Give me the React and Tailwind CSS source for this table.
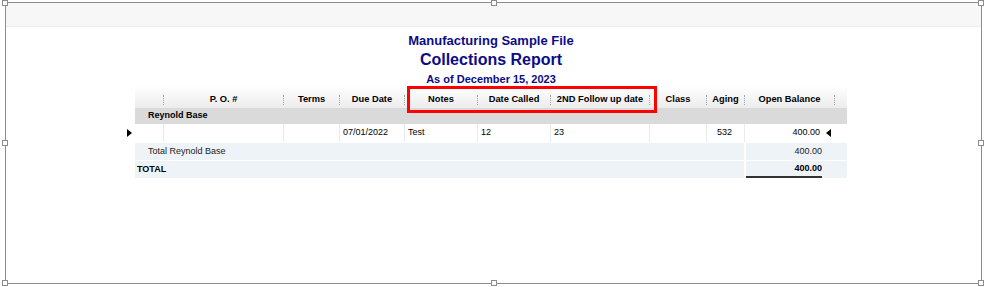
import React from 'react';

const cols = [
  { w: 'w-[28px]', label: '' },
  { w: 'w-[120px]', label: 'P. O. #' },
  { w: 'w-[56px]', label: 'Terms' },
  { w: 'w-[65px]', label: 'Due Date' },
  { w: 'w-[73px]', label: 'Notes' },
  { w: 'w-[73px]', label: 'Date Called' },
  { w: 'w-[99px]', label: '2ND Follow up date' },
  { w: 'w-[57px]', label: 'Class' },
  { w: 'w-[38px]', label: 'Aging' },
  { w: 'w-[90px]', label: 'Open Balance' },
  { w: 'w-[13px]', label: '' },
];

const rowData = ['', '', '', '07/01/2022', 'Test', '12', '23', '', '532', '400.00', ''];

const Handle = ({ className }) => (
  <div className={`absolute w-[6px] h-[6px] bg-white border border-[#8c8c8c] ${className}`} />
);

const MarkerRight = () => (
  <svg width="5" height="8" viewBox="0 0 5 8">
    <polygon points="0,0 5,4 0,8" fill="#000" />
  </svg>
);

const MarkerLeft = () => (
  <svg width="5" height="8" viewBox="0 0 5 8">
    <polygon points="5,0 0,4 5,8" fill="#000" />
  </svg>
);

export default function App() {
  return (
    <div className="relative w-[986px] h-[287px] bg-white overflow-hidden pt-[2px] pl-[5px] font-['Liberation_Sans',Arial,sans-serif] text-black">
      {/* selection frame */}
      <div className="relative w-[977px] h-[282px] border border-[#8c8c8c]">
        <div className="h-[24px] bg-[#f7f7f7] border-b border-[#ededed]" />

        {/* Titles */}
        <div className="ml-[129px] w-[712px] pt-[6px] text-center font-bold text-[#0c0c85]">
          <div className="text-[13px] leading-[15px]">Manufacturing Sample File</div>
          <div className="mt-[2px] text-[16px] leading-[19px]">Collections Report</div>
          <div className="mt-[4px] text-[11px] leading-[13px]">As of December 15, 2023</div>
        </div>

        {/* Report table */}
        <div className="ml-[119px] text-[9px]">
          {/* header */}
          <div className="flex">
            <div className="w-[10px]" />
            <div className="flex h-[22px] bg-linear-to-b from-white to-[#ececec] font-bold text-[9.3px]">
              {cols.map((c, i) => (
                <div key={i} className={`${c.w} flex items-end pb-[3px]`}>
                  {i > 0 && <span className="h-[10px] border-l border-dotted border-[#a0a0a0]" />}
                  <span className="flex-1 text-center leading-[11px] whitespace-nowrap">{c.label}</span>
                </div>
              ))}
            </div>
          </div>

          {/* group row */}
          <div className="flex">
            <div className="w-[10px]" />
            <div className="w-[712px] h-[16px] bg-[#dadada] flex items-center pl-[13px] font-bold">
              Reynold Base
            </div>
          </div>

          {/* data row */}
          <div className="flex h-[18px]">
            <div className="w-[10px] flex items-center pl-[2px]">
              <MarkerRight />
            </div>
            <div className="flex bg-white">
              {cols.map((c, i) => {
                if (i === 9) {
                  return (
                    <div key={i} className={`${c.w} flex items-center justify-end pr-[3px] border-l border-[#ebebeb]`}>
                      <span>{rowData[i]}</span>
                      <span className="ml-[6px] flex items-center">
                        <MarkerLeft />
                      </span>
                    </div>
                  );
                }
                return (
                  <div
                    key={i}
                    className={`${c.w} flex items-center ${i === 8 ? 'justify-end pr-[12px]' : 'px-[3px]'} ${
                      i > 0 && i < 10 ? 'border-l border-[#ebebeb]' : ''
                    }`}
                  >
                    {rowData[i]}
                  </div>
                );
              })}
            </div>
          </div>

          {/* total group row */}
          <div className="flex mt-[1px] h-[17px]">
            <div className="w-[10px]" />
            <div className="w-[609px] bg-[#eef3f8] flex items-center pl-[13px] text-[#222]">
              Total Reynold Base
            </div>
            <div className="w-[101px] ml-[2px] bg-[#eef3f8] flex items-center justify-end pr-[25px] text-[#222]">
              400.00
            </div>
          </div>

          {/* grand total */}
          <div className="flex mt-[1px] h-[17px] font-bold">
            <div className="w-[10px]" />
            <div className="w-[609px] bg-[#eef3f8] flex items-center pl-[2px]">TOTAL</div>
            <div className="w-[101px] ml-[2px] bg-[#eef3f8] flex justify-start">
              <div className="w-[76px] flex items-center justify-end border-b-2 border-[#333]">400.00</div>
            </div>
          </div>
        </div>

        {/* resize handles */}
        <Handle className="-left-[4px] -top-[3px]" />
        <Handle className="left-1/2 -translate-x-1/2 -top-[3px]" />
        <Handle className="-right-[3px] -top-[3px]" />
        <Handle className="-left-[4px] top-1/2 -translate-y-1/2" />
        <Handle className="-right-[3px] top-1/2 -translate-y-1/2" />
        <Handle className="-left-[4px] -bottom-[3px]" />
        <Handle className="left-1/2 -translate-x-1/2 -bottom-[3px]" />
        <Handle className="-right-[3px] -bottom-[3px]" />
      </div>

      {/* highlight box */}
      <div className="absolute left-[407px] top-[86px] w-[250px] h-[27px] border-[3px] border-[#ff0000]" />
    </div>
  );
}
